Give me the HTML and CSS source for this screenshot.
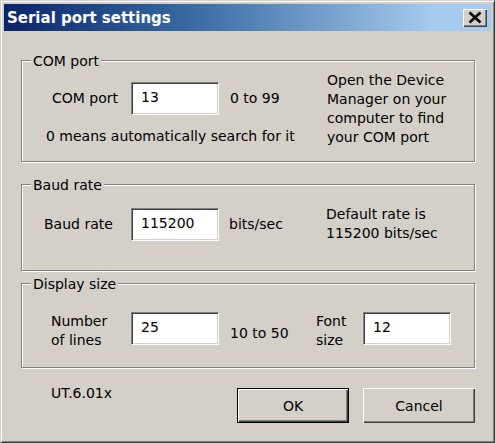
FILE: index.html
```html
<!DOCTYPE html>
<html>
<head>
<meta charset="utf-8">
<link rel="stylesheet" href="styles.css">
</head>
<body>
<div class="window">
  <div class="titlebar">
    <span class="title">Serial port settings</span>
    <div class="close">
      <svg width="24" height="18" viewBox="0 0 24 18"><path d="M6.5 3.5 L17.5 13.5 M17.5 3.5 L6.5 13.5" stroke="#000" stroke-width="2.6" fill="none"/></svg>
    </div>
  </div>
  <div class="content">
    <fieldset class="group g1">
      <legend>COM port</legend>
      <div class="g1-grid">
        <div class="g1-left">
          <div class="row r1">
            <span class="lbl l1">COM port</span>
            <div class="input">13</div>
            <span class="units u1">0 to 99</span>
          </div>
          <div class="note">0 means automatically search for it</div>
        </div>
        <div class="hint h1">Open the Device<br>Manager on your<br>computer to find<br>your COM port</div>
      </div>
    </fieldset>

    <fieldset class="group g2">
      <legend>Baud rate</legend>
      <div class="row r2">
        <span class="lbl l2">Baud rate</span>
        <div class="input">115200</div>
        <span class="units u2">bits/sec</span>
        <div class="hint">Default rate is<br>115200 bits/sec</div>
      </div>
    </fieldset>

    <fieldset class="group g3">
      <legend>Display size</legend>
      <div class="row r3">
        <span class="lbl l3">Number<br>of lines</span>
        <div class="input">25</div>
        <span class="units u3">10 to 50</span>
        <span class="lbl l4">Font<br>size</span>
        <div class="input">12</div>
      </div>
    </fieldset>

    <div class="footer">
      <span class="version">UT.6.01x</span>
      <div class="buttons">
        <div class="btn default">OK</div>
        <div class="btn">Cancel</div>
      </div>
    </div>
  </div>
</div>
</body>
</html>
```

FILE: styles.css
```css
html, body {
  margin: 0;
  padding: 0;
  background: #d4d0c8;
}

.window {
  width: 495px;
  height: 443px;
  box-sizing: border-box;
  border: 1px solid;
  border-color: #d4d0c8 #404040 #404040 #d4d0c8;
  box-shadow: inset 1px 1px 0 #ffffff, inset -1px -1px 0 #808080;
  padding: 3px;
  background: #d4d0c8;
  font-family: "DejaVu Sans", Verdana, sans-serif;
  font-size: 14px;
  color: #000;
  overflow: hidden;
}

.titlebar {
  height: 27px;
  display: flex;
  align-items: center;
  justify-content: space-between;
  padding-left: 3px;
  padding-right: 4px;
  background: linear-gradient(to right, #0a246a 0%, #3a6ea5 40%, #a6caf0 88%, #a6caf0 100%);
}

.title {
  color: #fff;
  font-weight: bold;
  font-size: 15px;
  line-height: 18px;
}

.close {
  width: 24px;
  height: 18px;
  box-sizing: border-box;
  background: #d4d0c8;
  box-shadow: inset 1px 1px 0 #ffffff, inset -1px -1px 0 #404040, inset -2px -2px 0 #808080;
  margin-top: 1px;
}

.close svg {
  display: block;
}

.content {
  padding: 20px 16px 0 17px;
}

.group {
  margin: 0;
  padding: 0;
  min-inline-size: 0;
  border: 1px solid #808080;
  box-shadow: inset 1px 1px 0 #ffffff, 1px 1px 0 #ffffff;
}

.group legend {
  margin-left: 9px;
  padding: 3px 2px 0 2px;
  line-height: 15px;
  background: #d4d0c8;
}

.g2 { margin-top: 13px; }
.g3 { margin-top: 3px; }

.row {
  display: flex;
}

.lbl {
  line-height: 19px;
}

.units {
  line-height: 19px;
}

.input {
  width: 88px;
  height: 33px;
  box-sizing: border-box;
  background: #fff;
  border-top: 1px solid #808080;
  border-left: 1px solid #808080;
  border-bottom: 1px solid #ffffff;
  border-right: 1px solid #ffffff;
  box-shadow: inset 1px 1px 0 #404040, inset -1px -1px 0 #d4d0c8;
  padding-left: 9px;
  line-height: 29px;
  flex: none;
}

.hint {
  line-height: 19px;
}

/* COM port group */
.g1-grid {
  display: grid;
  grid-template-columns: 305px 1fr;
  align-items: start;
  padding-bottom: 14px;
}

.r1 {
  padding-top: 13px;
  padding-left: 30px;
  align-items: center;
}

.l1 { width: 79px; }
.u1 { margin-left: 11px; }

.note {
  margin-top: 12px;
  padding-left: 24px;
  line-height: 19px;
}

.h1 {
  margin-top: 2px;
}

/* Baud rate group */
.r2 {
  padding: 12px 0 27px 22px;
  align-items: center;
}

.l2 { width: 87px; }
.u2 { margin-left: 10px; width: 97px; }

/* Display size group */
.r3 {
  padding: 20px 0 17px 29px;
  align-items: flex-start;
}

.l3 { width: 80px; }
.u3 { margin-left: 11px; width: 86px; margin-top: 12px; }
.l4 { width: 47px; }

/* footer */
.footer {
  display: flex;
  align-items: flex-start;
  margin-top: 20px;
}

.version {
  margin-left: 30px;
  margin-top: -4px;
  line-height: 19px;
}

.buttons {
  margin-left: auto;
  display: flex;
  gap: 14px;
}

.btn {
  width: 112px;
  height: 35px;
  box-sizing: border-box;
  display: flex;
  align-items: center;
  justify-content: center;
  background: #d4d0c8;
  box-shadow: inset 1px 1px 0 #ffffff, inset -1px -1px 0 #404040, inset -2px -2px 0 #808080;
}

.btn.default {
  border: 1px solid #000;
}
```
